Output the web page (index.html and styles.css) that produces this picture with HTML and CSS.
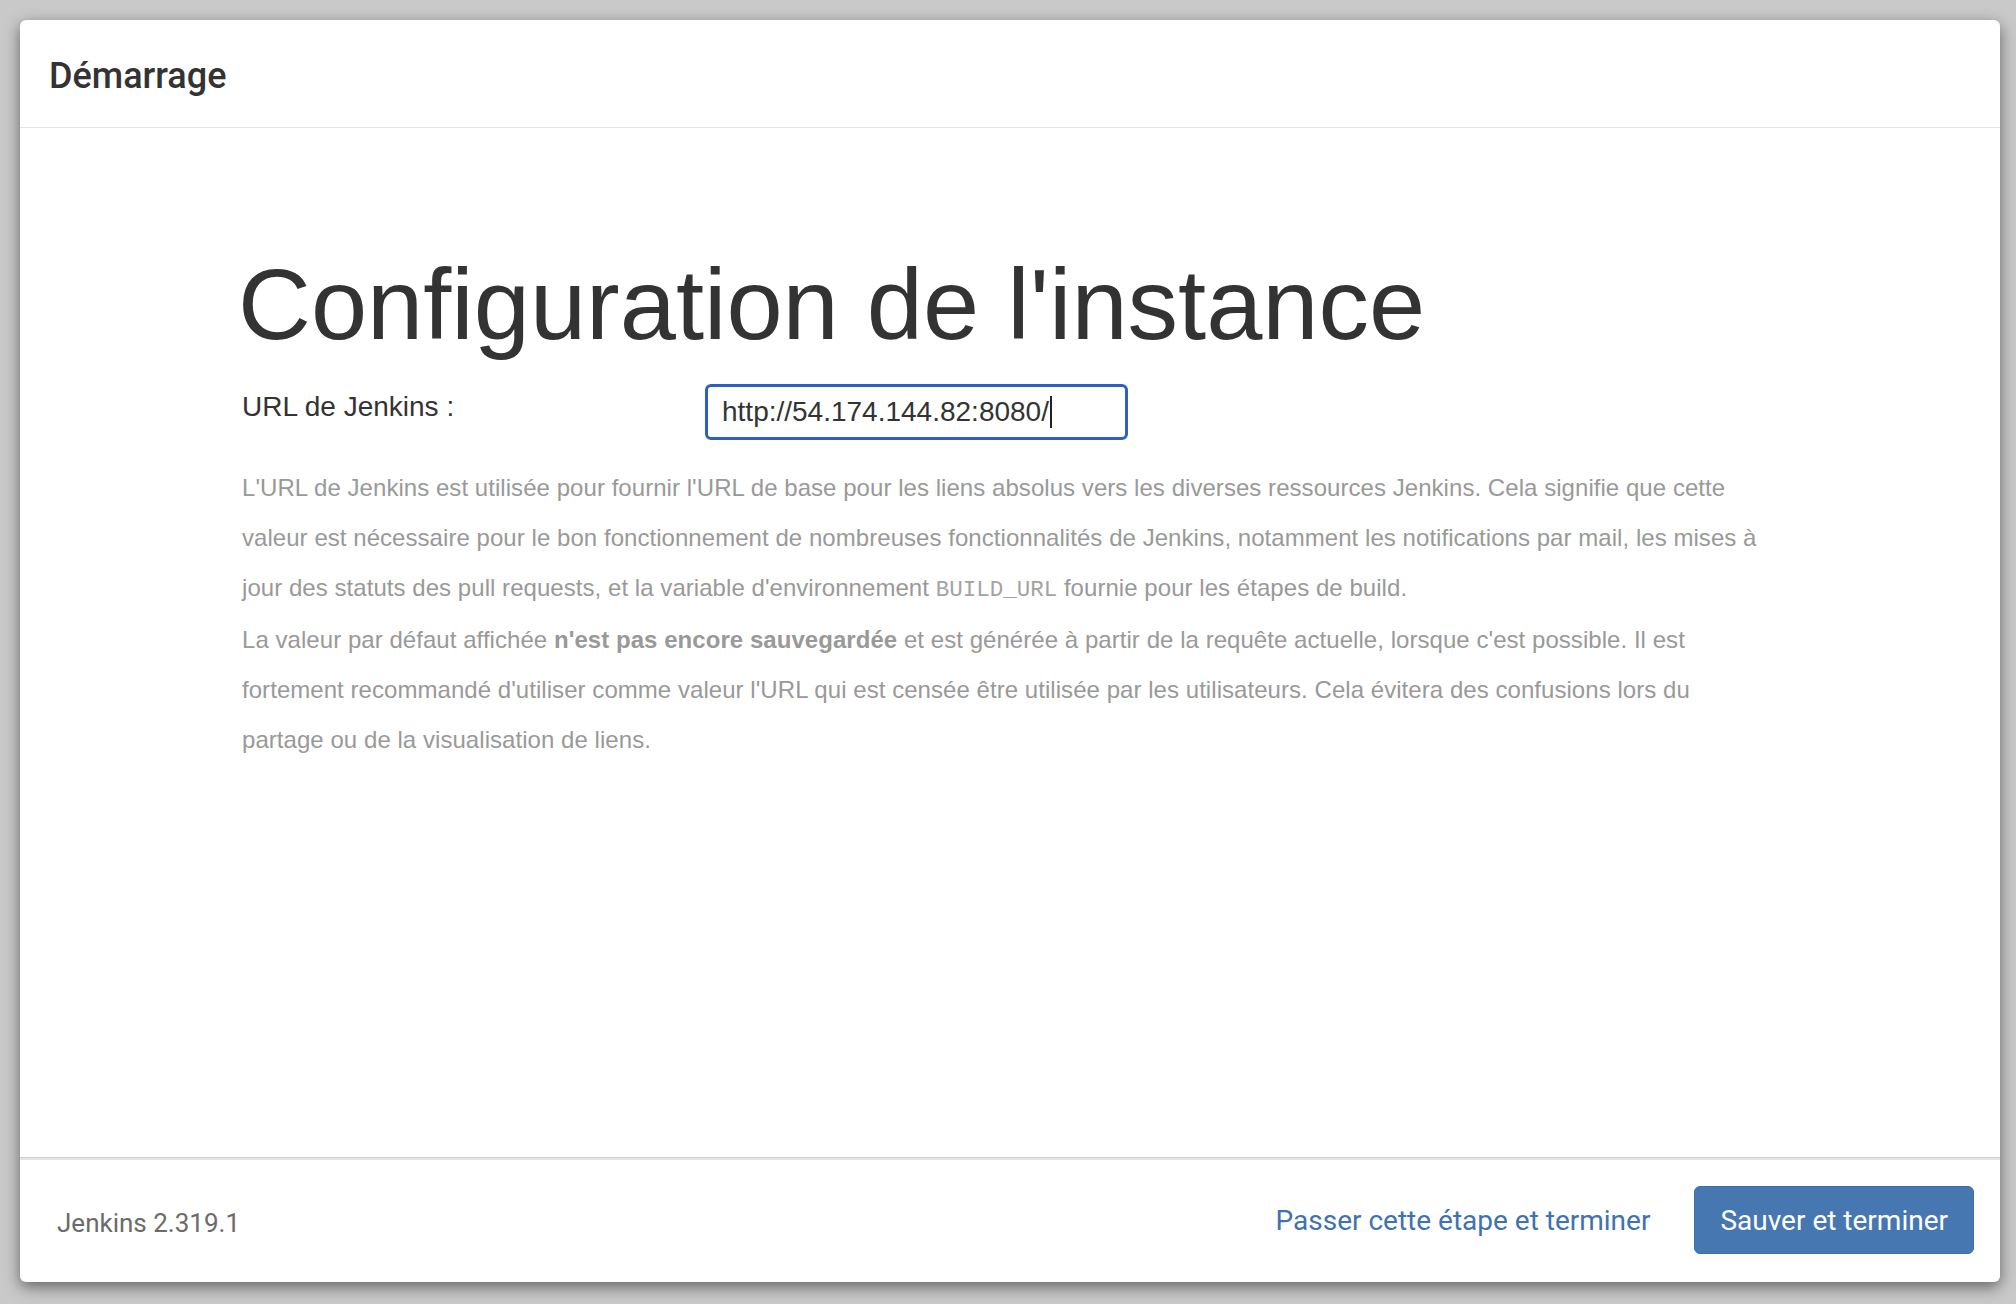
FILE: index.html
```html
<!DOCTYPE html>
<html lang="fr">
<head>
<meta charset="utf-8">
<title>Démarrage</title>
<link rel="stylesheet" href="styles.css">
</head>
<body>
<div class="dialog">
  <header class="dialog-header">
    <h4 class="dialog-title">Démarrage</h4>
  </header>
  <main class="dialog-body">
    <h1 class="page-title">Configuration de l'instance</h1>
    <div class="form-row">
      <label class="form-label" for="url">URL de Jenkins :</label>
      <div class="fake-input" id="url"><span class="input-text">http://54.174.144.82:8080/</span><span class="caret"></span></div>
    </div>
    <div class="help">
      <p>L'URL de Jenkins est utilisée pour fournir l'URL de base pour les liens absolus vers les diverses ressources Jenkins. Cela signifie que cette valeur est nécessaire pour le bon fonctionnement de nombreuses fonctionnalités de Jenkins, notamment les notifications par mail, les mises à jour des statuts des pull requests, et la variable d'environnement <code>BUILD_URL</code> fournie pour les étapes de build.</p>
      <p>La valeur par défaut affichée <strong>n'est pas encore sauvegardée</strong> et est générée à partir de la requête actuelle, lorsque c'est possible. Il est fortement recommandé d'utiliser comme valeur l'URL qui est censée être utilisée par les utilisateurs. Cela évitera des confusions lors du partage ou de la visualisation de liens.</p>
    </div>
  </main>
  <footer class="dialog-footer">
    <span class="version">Jenkins 2.319.1</span>
    <div class="actions">
      <a class="skip-link" href="#">Passer cette étape et terminer</a>
      <button class="btn-primary" type="button">Sauver et terminer</button>
    </div>
  </footer>
</div>
</body>
</html>
```

FILE: styles.css
```css
html, body {
  margin: 0;
  padding: 0;
}

body {
  background: #c9c9c9;
  width: 2016px;
  height: 1304px;
  overflow: hidden;
  padding: 20px 0 0 20px;
  box-sizing: border-box;
}

.dialog {
  width: 1980px;
  height: 1262px;
  background: #fff;
  border-radius: 6px;
  box-shadow: 0 5px 15px rgba(0, 0, 0, 0.5);
  display: flex;
  flex-direction: column;
  overflow: hidden;
}

.dialog-header {
  height: 108px;
  box-sizing: border-box;
  padding: 4px 29px 0;
  display: flex;
  align-items: center;
  border-bottom: 1px solid #e5e5e5;
  flex: none;
}

.dialog-title {
  margin: 0;
  font-family: Roboto, "Noto Sans", sans-serif;
  font-weight: 500;
  font-size: 36px;
  color: #333;
}

.dialog-body {
  flex: 1;
  padding: 121px 222px 0;
  font-family: "Liberation Sans", Arial, sans-serif;
  color: #333;
}

.page-title {
  margin: 0 0 25px -4px;
  font-size: 101px;
  line-height: 110px;
  font-weight: normal;
  color: #333;
}

.form-row {
  display: grid;
  grid-template-columns: 463px 423px;
  align-items: start;
}

.form-label {
  font-size: 28px;
  line-height: 34px;
  margin-top: 6px;
  color: #333;
}

.fake-input {
  height: 56px;
  box-sizing: border-box;
  border: 3px solid #2e5fc4;
  border-radius: 6px;
  padding: 0 14px;
  display: flex;
  align-items: center;
  font-size: 28px;
  color: #333;
}

.caret {
  display: inline-block;
  width: 2px;
  height: 32px;
  background: #222;
  margin-left: 1px;
}

.help {
  margin-top: 23px;
  font-size: 24px;
  letter-spacing: 0.05px;
  line-height: 50px;
  color: #999;
}

.help p {
  margin: 0;
}

.help code {
  font-family: "Liberation Mono", "Courier New", monospace;
  font-size: 22.5px;
  letter-spacing: 0;
  color: #a3a3a3;
}

.help strong {
  font-weight: bold;
}

.dialog-footer {
  flex: none;
  height: 125px;
  box-sizing: border-box;
  border-top: 1px solid #cfcfcf;
  box-shadow: inset 0 2px 0 0 #e4e4e4;
  padding: 0 26px 0 37px;
  display: flex;
  align-items: center;
  justify-content: space-between;
  font-family: Roboto, "Noto Sans", sans-serif;
}

.version {
  font-size: 26px;
  color: #6b6b6b;
  padding-top: 6px;
}

.actions {
  display: flex;
  align-items: center;
  gap: 44px;
}

.skip-link {
  font-size: 28px;
  color: #3f72ae;
  text-decoration: none;
}

.btn-primary {
  height: 68px;
  padding: 0 25px;
  font-family: Roboto, "Noto Sans", sans-serif;
  font-size: 28px;
  color: #fff;
  background: #4677b0;
  border: 1px solid #3f6da5;
  border-radius: 6px;
}
```
